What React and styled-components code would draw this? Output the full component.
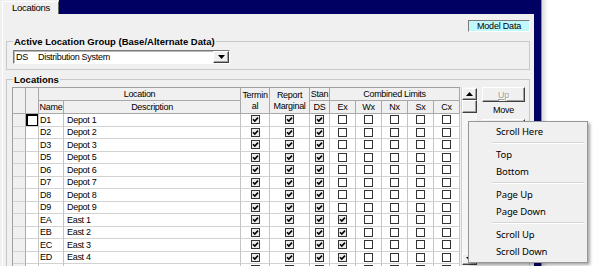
import React from "react";
import styled, { createGlobalStyle } from "styled-components";

const GlobalStyle = createGlobalStyle`
  html, body {
    margin: 0;
    padding: 0;
    background: #fff;
  }
`;

const NAVY = "#000062";
const FACE = "#f0f0f0";
const COLUMNS = "13px 13px 25px 177px 29px 40px 20px repeat(5, 26px)";

const Screen = styled.div`
  position: relative;
  width: 600px;
  height: 266px;
  overflow: hidden;
  display: flex;
  background: #fff;
  font-family: "Liberation Sans", Arial, sans-serif;
  font-size: 9px;
  letter-spacing: -0.3px;
  color: #000;
`;

const Window = styled.div`
  display: flex;
  width: 541px;
  flex-shrink: 0;
  border-right: 1px solid #8c8c8c;
`;

const Main = styled.div`
  width: 534px;
  display: flex;
  flex-direction: column;
  background: ${FACE};
`;

const NavyEdge = styled.div`
  flex: 1;
  background: ${NAVY};
`;

const Desktop = styled.div`
  flex: 1;
  background: linear-gradient(to right, rgba(0, 0, 0, 0.14), rgba(0, 0, 0, 0) 6px), #fff;
`;

const TabStrip = styled.div`
  display: flex;
  height: 14px;
  padding-left: 2px;
  background: ${FACE};
`;

const Tab = styled.div`
  width: 57px;
  margin-top: 1px;
  box-sizing: border-box;
  padding-left: 9px;
  line-height: 12px;
  font-size: 9.5px;
  border: 1px solid #fff;
  border-right-color: #6c6c6c;
  border-bottom: none;
  background: ${FACE};
`;

const TabFill = styled.div`
  flex: 1;
  background: ${NAVY};
`;

const Page = styled.div`
  flex: 1;
  display: flex;
  flex-direction: column;
  margin-left: 2px;
  padding: 6px 4px 0 0;
  border-left: 1px solid #fff;
  overflow: hidden;
`;

const BadgeRow = styled.div`
  display: flex;
  justify-content: flex-end;
`;

const Badge = styled.div`
  width: 62px;
  height: 12px;
  box-sizing: border-box;
  border: 1px solid #fff;
  border-top-color: #7a7a7a;
  border-left-color: #7a7a7a;
  background: #bff9fb;
  text-align: center;
  line-height: 10px;
  letter-spacing: -0.2px;
`;

const Group = styled.fieldset`
  margin: ${(p) => p.$top}px 0 0 3px;
  padding: 0 ${(p) => p.$padRight}px ${(p) => p.$padBottom}px 5px;
  border: 1px solid #c9c9c9;
  min-width: 0;
  height: ${(p) => (p.$height ? `${p.$height}px` : "auto")};
  box-sizing: border-box;
`;

const Legend = styled.legend`
  padding: 0 1px;
  margin-left: 1px;
  font-weight: bold;
  font-size: 9.5px;
  letter-spacing: 0;
  line-height: 11px;
`;

const Combo = styled.div`
  display: flex;
  align-items: center;
  width: 217px;
  height: 14px;
  margin: 3px 0 0 1px;
  box-sizing: border-box;
  border: 1px solid #fff;
  border-top-color: #7a7a7a;
  border-left-color: #7a7a7a;
  background: #fff;
  box-shadow: inset 1px 1px #b8b8b8;
`;

const ComboCode = styled.span`
  width: 22px;
  padding-left: 2px;
`;

const ComboText = styled.span`
  flex: 1;
`;

const Raised = styled.div`
  box-sizing: border-box;
  border: 1px solid #fff;
  border-right-color: #404040;
  border-bottom-color: #404040;
  box-shadow: inset -1px -1px #a0a0a0;
  background: ${FACE};
  display: flex;
  align-items: center;
  justify-content: center;
`;

const ComboButton = styled(Raised)`
  width: 16px;
  height: 12px;
`;

const Body = styled.div`
  display: flex;
  align-items: flex-start;
  margin-top: 2px;
`;

const GridBox = styled.div`
  border-left: 1px solid #a0a0a0;
  border-top: 1px solid #a0a0a0;
`;

const HeadGrid = styled.div`
  display: grid;
  grid-template-columns: ${COLUMNS};
  grid-template-rows: 13px 13px;
`;

const HeadCell = styled.div`
  grid-column: ${(p) => p.$c} / span ${(p) => p.$cs || 1};
  grid-row: ${(p) => p.$r} / span ${(p) => p.$rs || 1};
  display: flex;
  align-items: center;
  justify-content: center;
  text-align: center;
  line-height: 11px;
  background: ${FACE};
  border-right: 1px solid #a8a8a8;
  border-bottom: 1px solid #a8a8a8;
  overflow: hidden;
`;

const BodyGrid = styled.div`
  display: grid;
  grid-template-columns: ${COLUMNS};
  grid-auto-rows: 12.5px;
`;

const Cell = styled.div`
  box-sizing: border-box;
  display: flex;
  align-items: center;
  justify-content: ${(p) => (p.$center ? "center" : "flex-start")};
  padding-left: ${(p) => p.$pad || 0}px;
  background: ${(p) => (p.$fixed ? FACE : "#fff")};
  border-right: 1px solid ${(p) => (p.$fixed ? "#a8a8a8" : "#c4c4c4")};
  border-bottom: 1px solid #d2d2d2;
  white-space: nowrap;
  overflow: hidden;
`;

const CurrentBox = styled.div`
  width: 100%;
  height: 100%;
  box-sizing: border-box;
  border: 1px solid #000;
  border-left-width: 2px;
  border-top-width: 2px;
`;

const Box = styled.span`
  width: 9px;
  height: 9px;
  box-sizing: border-box;
  border: 1px solid #333;
  background: ${(p) => (p.$on ? "#ececec" : "#fff")};
  display: flex;
`;

const ScrollBar = styled.div`
  width: 16px;
  height: 178px;
  margin-left: 1px;
  box-sizing: border-box;
  display: flex;
  flex-direction: column;
  justify-content: space-between;
  background: #f6f6f6;
  border-left: 1px solid #d0d0d0;
`;

const ScrollTop = styled.div`
  display: flex;
  flex-direction: column;
`;

const ArrowButton = styled(Raised)`
  height: 12px;
  margin-top: 1px;
`;

const Thumb = styled(Raised)`
  height: 13px;
`;

const Side = styled.div`
  width: 43px;
  margin-left: 5px;
  display: flex;
  flex-direction: column;
`;

const SideButton = styled(Raised)`
  height: 15px;
  color: ${(p) => (p.$disabled ? "#a0a0a0" : "#000")};
  text-shadow: ${(p) => (p.$disabled ? "1px 1px #fff" : "none")};
`;

const SideLabel = styled.div`
  text-align: center;
  line-height: 12px;
  margin: 2px 0 3px;
`;

const Menu = styled.div`
  position: absolute;
  left: 468px;
  top: 121px;
  width: 120px;
  height: 142px;
  box-sizing: border-box;
  padding: 1px 2px 2px;
  border: 1px solid #979797;
  background: ${FACE};
  box-shadow: 2px 2px 3px rgba(0, 0, 0, 0.35);
  font-family: "Noto Sans", "Open Sans", sans-serif;
  font-size: 9.5px;
  letter-spacing: -0.1px;
  color: #000;
`;

const MenuItem = styled.div`
  height: 17px;
  line-height: 17px;
  padding-left: 25px;
`;

const MenuSeparator = styled.div`
  height: 1px;
  margin: 2px 1px 3px 21px;
  background: #d5d5d5;
  box-shadow: 0 1px #fff;
`;

const rows = [
  ["D1", "Depot 1", false],
  ["D2", "Depot 2", false],
  ["D3", "Depot 3", false],
  ["D5", "Depot 5", false],
  ["D6", "Depot 6", false],
  ["D7", "Depot 7", false],
  ["D8", "Depot 8", false],
  ["D9", "Depot 9", false],
  ["EA", "East 1", true],
  ["EB", "East 2", true],
  ["EC", "East 3", true],
  ["ED", "East 4", true],
  ["EE", "East 5", true],
];

function Check({ on }) {
  return (
    <Box $on={on}>
      {on && (
        <svg width="7" height="7" viewBox="0 0 7 7">
          <path d="M1 3.2 L2.8 5 L6 1.6" fill="none" stroke="#000" strokeWidth="1.6" />
        </svg>
      )}
    </Box>
  );
}

function Triangle({ up }) {
  return (
    <svg width="7" height="4" viewBox="0 0 7 4">
      <path d={up ? "M0 4 L3.5 0 L7 4 Z" : "M0 0 L7 0 L3.5 4 Z"} fill="#000" />
    </svg>
  );
}

function LocationGrid() {
  return (
    <GridBox>
      <HeadGrid>
        <HeadCell $c={1} $r={1} $rs={2} />
        <HeadCell $c={2} $r={1} $rs={2} />
        <HeadCell $c={3} $cs={2} $r={1}>Location</HeadCell>
        <HeadCell $c={3} $r={2}>Name</HeadCell>
        <HeadCell $c={4} $r={2}>Description</HeadCell>
        <HeadCell $c={5} $r={1} $rs={2}>
          Termin
          <br />
          al
        </HeadCell>
        <HeadCell $c={6} $r={1} $rs={2}>Report Marginal</HeadCell>
        <HeadCell $c={7} $r={1}>Stan</HeadCell>
        <HeadCell $c={7} $r={2}>DS</HeadCell>
        <HeadCell $c={8} $cs={5} $r={1}>Combined Limits</HeadCell>
        {["Ex", "Wx", "Nx", "Sx", "Cx"].map((name, i) => (
          <HeadCell key={name} $c={8 + i} $r={2}>
            {name}
          </HeadCell>
        ))}
      </HeadGrid>
      <BodyGrid>
        {rows.map(([code, desc, ex], i) => (
          <React.Fragment key={code}>
            <Cell $fixed />
            <Cell>{i === 0 && <CurrentBox />}</Cell>
            <Cell $pad={1}>{code}</Cell>
            <Cell $pad={3}>{desc}</Cell>
            <Cell $center><Check on /></Cell>
            <Cell $center><Check on /></Cell>
            <Cell $center><Check on /></Cell>
            <Cell $center><Check on={ex} /></Cell>
            <Cell $center><Check /></Cell>
            <Cell $center><Check /></Cell>
            <Cell $center><Check /></Cell>
            <Cell $center><Check /></Cell>
          </React.Fragment>
        ))}
      </BodyGrid>
    </GridBox>
  );
}

export default function App() {
  return (
    <>
      <GlobalStyle />
      <Screen>
        <Window>
          <Main>
            <TabStrip>
              <Tab>Locations</Tab>
              <TabFill />
            </TabStrip>
            <Page>
              <BadgeRow>
                <Badge>Model Data</Badge>
              </BadgeRow>
              <Group $top={4} $padRight={6} $padBottom={5}>
                <Legend>Active Location Group (Base/Alternate Data)</Legend>
                <Combo>
                  <ComboCode>DS</ComboCode>
                  <ComboText>Distribution System</ComboText>
                  <ComboButton>
                    <Triangle />
                  </ComboButton>
                </Combo>
              </Group>
              <Group $top={4} $padRight={3} $padBottom={0} $height={220}>
                <Legend>Locations</Legend>
                <Body>
                  <LocationGrid />
                  <ScrollBar>
                    <ScrollTop>
                      <ArrowButton>
                        <Triangle up />
                      </ArrowButton>
                      <Thumb />
                    </ScrollTop>
                    <ArrowButton>
                      <Triangle />
                    </ArrowButton>
                  </ScrollBar>
                  <Side>
                    <SideButton $disabled>
                      <u>U</u>p
                    </SideButton>
                    <SideLabel>Move</SideLabel>
                    <SideButton />
                  </Side>
                </Body>
              </Group>
            </Page>
          </Main>
          <NavyEdge />
        </Window>
        <Desktop />
        <Menu>
          <MenuItem>Scroll Here</MenuItem>
          <MenuSeparator />
          <MenuItem>Top</MenuItem>
          <MenuItem>Bottom</MenuItem>
          <MenuSeparator />
          <MenuItem>Page Up</MenuItem>
          <MenuItem>Page Down</MenuItem>
          <MenuSeparator />
          <MenuItem>Scroll Up</MenuItem>
          <MenuItem>Scroll Down</MenuItem>
        </Menu>
      </Screen>
    </>
  );
}
